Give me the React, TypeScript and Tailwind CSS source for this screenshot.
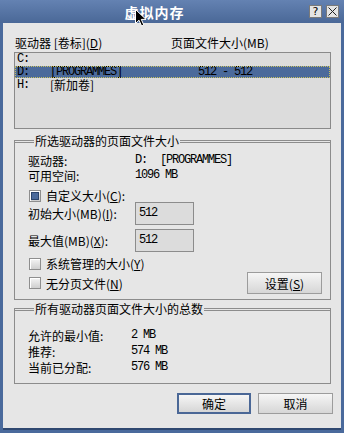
import type { ReactNode } from 'react'

function M({ children }: { children: ReactNode }) {
  return <span className="font-['Liberation_Mono'] tracking-[-1.2px]">{children}</span>
}

function Check({ on }: { on?: boolean }) {
  return (
    <span className="flex h-[12px] w-[12px] items-center justify-center border border-[#8e8e8e] bg-gradient-to-b from-[#f4f4f4] to-[#cfcfcf] shadow-[inset_1px_1px_0_#ffffff]">
      {on && <span className="h-[8px] w-[8px] border border-[#2c446b] bg-[#4b6a9b]" />}
    </span>
  )
}

function Btn({ children, def, className }: { children: ReactNode; def?: boolean; className?: string }) {
  return (
    <div
      className={
        'flex h-[21px] items-center justify-center bg-gradient-to-b from-[#f6f6f6] to-[#d6d6d6] ' +
        (def ? 'border-2 border-[#4a6796] ' : 'border border-[#9c9c9c] ') +
        (className ?? '')
      }
    >
      {children}
    </div>
  )
}

function Legend({ children }: { children: ReactNode }) {
  return <legend className="ml-[6px] px-[1px] leading-[14px]">{children}</legend>
}

export default function App() {
  return (
    <div className="relative flex h-[433px] w-[344px] flex-col bg-[#4a6a9c] font-['Noto_Sans_CJK_SC',sans-serif] text-[12px] leading-[15px] text-black">
      {/* title bar */}
      <div className="flex h-[23px] items-center bg-gradient-to-b from-[#6482b2] to-[#4a6897] pr-[5px]">
        <div className="flex-1 pt-[1px] text-center text-[14px] font-bold tracking-[1px] text-white">虚拟内存</div>
        <div className="flex gap-[4px]">
          <div className="flex h-[13px] w-[13px] items-center justify-center border border-[#7a7a7a] bg-[#e4e4e4] font-['DejaVu_Sans'] text-[11px] leading-none">?</div>
          <div className="flex h-[13px] w-[13px] items-center justify-center border border-[#7a7a7a] bg-[#e4e4e4]">
            <svg width="9" height="9" viewBox="0 0 9 9">
              <path d="M0.5 0.5L8.5 8.5M8.5 0.5L0.5 8.5" stroke="#222" strokeWidth="1" />
            </svg>
          </div>
        </div>
      </div>

      {/* client area */}
      <div className="mx-[3px] mb-[3px] flex flex-1 flex-col border-b-[2px] border-[#2f4870] bg-[#e6e6e6] pl-[11px] pr-[10px] pt-[13px]">
        <div className="grid h-[14px] grid-cols-[156px_1fr] pl-[1px] leading-[14px]">
          <span>驱动器 [卷标](<u>D</u>)</span>
          <span>页面文件大小(MB)</span>
        </div>

        <div className="mt-[2px] flex h-[77px] flex-col gap-[1px] border border-[#8a8a8a] bg-[#dcdcdc] leading-[12px]">
          <div className="grid h-[12px] grid-cols-[33px_148px_1fr] pl-[2px]">
            <M>C:</M>
          </div>
          <div className="grid h-[12px] grid-cols-[33px_148px_1fr] bg-[#4b6a9b] pl-[2px] outline-1 outline-dotted outline-[#c8c060] -outline-offset-1">
            <M>D:</M>
            <M>[PROGRAMMES]</M>
            <M>512 - 512</M>
          </div>
          <div className="grid h-[12px] grid-cols-[33px_148px_1fr] pl-[2px]">
            <M>H:</M>
            <span>[新加卷]</span>
          </div>
        </div>

        {/* selected drive */}
        <fieldset className="mt-[5px] border border-t-[3px] border-[#8c8c8c] [border-top-style:double] pb-[5px] pl-[13px] pr-[8px] pt-[5px]">
          <Legend>所选驱动器的页面文件大小</Legend>
          <div className="grid h-[15px] grid-cols-[107px_1fr] items-center leading-[13px]">
            <span>驱动器:</span>
            <span className="flex gap-[13px]">
              <M>D:</M>
              <M>[PROGRAMMES]</M>
            </span>
          </div>
          <div className="grid h-[15px] grid-cols-[107px_1fr] items-center leading-[13px]">
            <span>可用空间:</span>
            <M>1096 MB</M>
          </div>
          <div className="mt-[6px] flex h-[13px] items-center gap-[5px] pl-[1px]">
            <Check on />
            <span>自定义大小(<u>C</u>):</span>
          </div>
          <div className="grid h-[23px] grid-cols-[107px_59px] items-center">
            <span>初始大小(MB)(<u>I</u>):</span>
            <div className="h-[23px] border border-[#8c8c8c] bg-[#dcdcdc] pl-[3px] pt-[1px] leading-[14px]">
              <M>512</M>
            </div>
          </div>
          <div className="mt-[4px] grid h-[23px] grid-cols-[107px_59px] items-center">
            <span>最大值(MB)(<u>X</u>):</span>
            <div className="h-[23px] border border-[#8c8c8c] bg-[#dcdcdc] pl-[3px] pt-[1px] leading-[14px]">
              <M>512</M>
            </div>
          </div>
          <div className="mt-[5px] flex h-[13px] items-center gap-[5px] pl-[1px]">
            <Check />
            <span>系统管理的大小(<u>Y</u>)</span>
          </div>
          <div className="mt-[2px] flex h-[22px] items-center justify-between pl-[1px]">
            <div className="flex items-center gap-[5px]">
              <Check />
              <span>无分页文件(<u>N</u>)</span>
            </div>
            <Btn className="h-[22px] w-[75px]">
              设置(<u>S</u>)
            </Btn>
          </div>
        </fieldset>

        {/* totals */}
        <fieldset className="mt-[2px] border border-t-[3px] border-[#8c8c8c] [border-top-style:double] pb-[8px] pl-[13px] pt-[11px]">
          <Legend>所有驱动器页面文件大小的总数</Legend>
          <div className="grid h-[16px] grid-cols-[103px_1fr] items-center">
            <span>允许的最小值:</span>
            <M>2 MB</M>
          </div>
          <div className="grid h-[16px] grid-cols-[103px_1fr] items-center">
            <span>推荐:</span>
            <M>574 MB</M>
          </div>
          <div className="grid h-[16px] grid-cols-[103px_1fr] items-center">
            <span>当前已分配:</span>
            <M>576 MB</M>
          </div>
        </fieldset>

        <div className="mr-[-2px] mt-[9px] flex justify-end gap-[7px]">
          <Btn def className="w-[74px]">
            确定
          </Btn>
          <Btn className="w-[75px]">取消</Btn>
        </div>
      </div>

      {/* mouse pointer over the title */}
      <svg className="absolute left-[135px] top-[9px]" width="12" height="18" viewBox="0 0 12 18">
        <path d="M0.5 0.5V14.5L4 11.2L6.6 17L8.8 16L6.3 10.4H11L0.5 0.5Z" fill="#000" stroke="#fff" strokeWidth="1" />
      </svg>
    </div>
  )
}
